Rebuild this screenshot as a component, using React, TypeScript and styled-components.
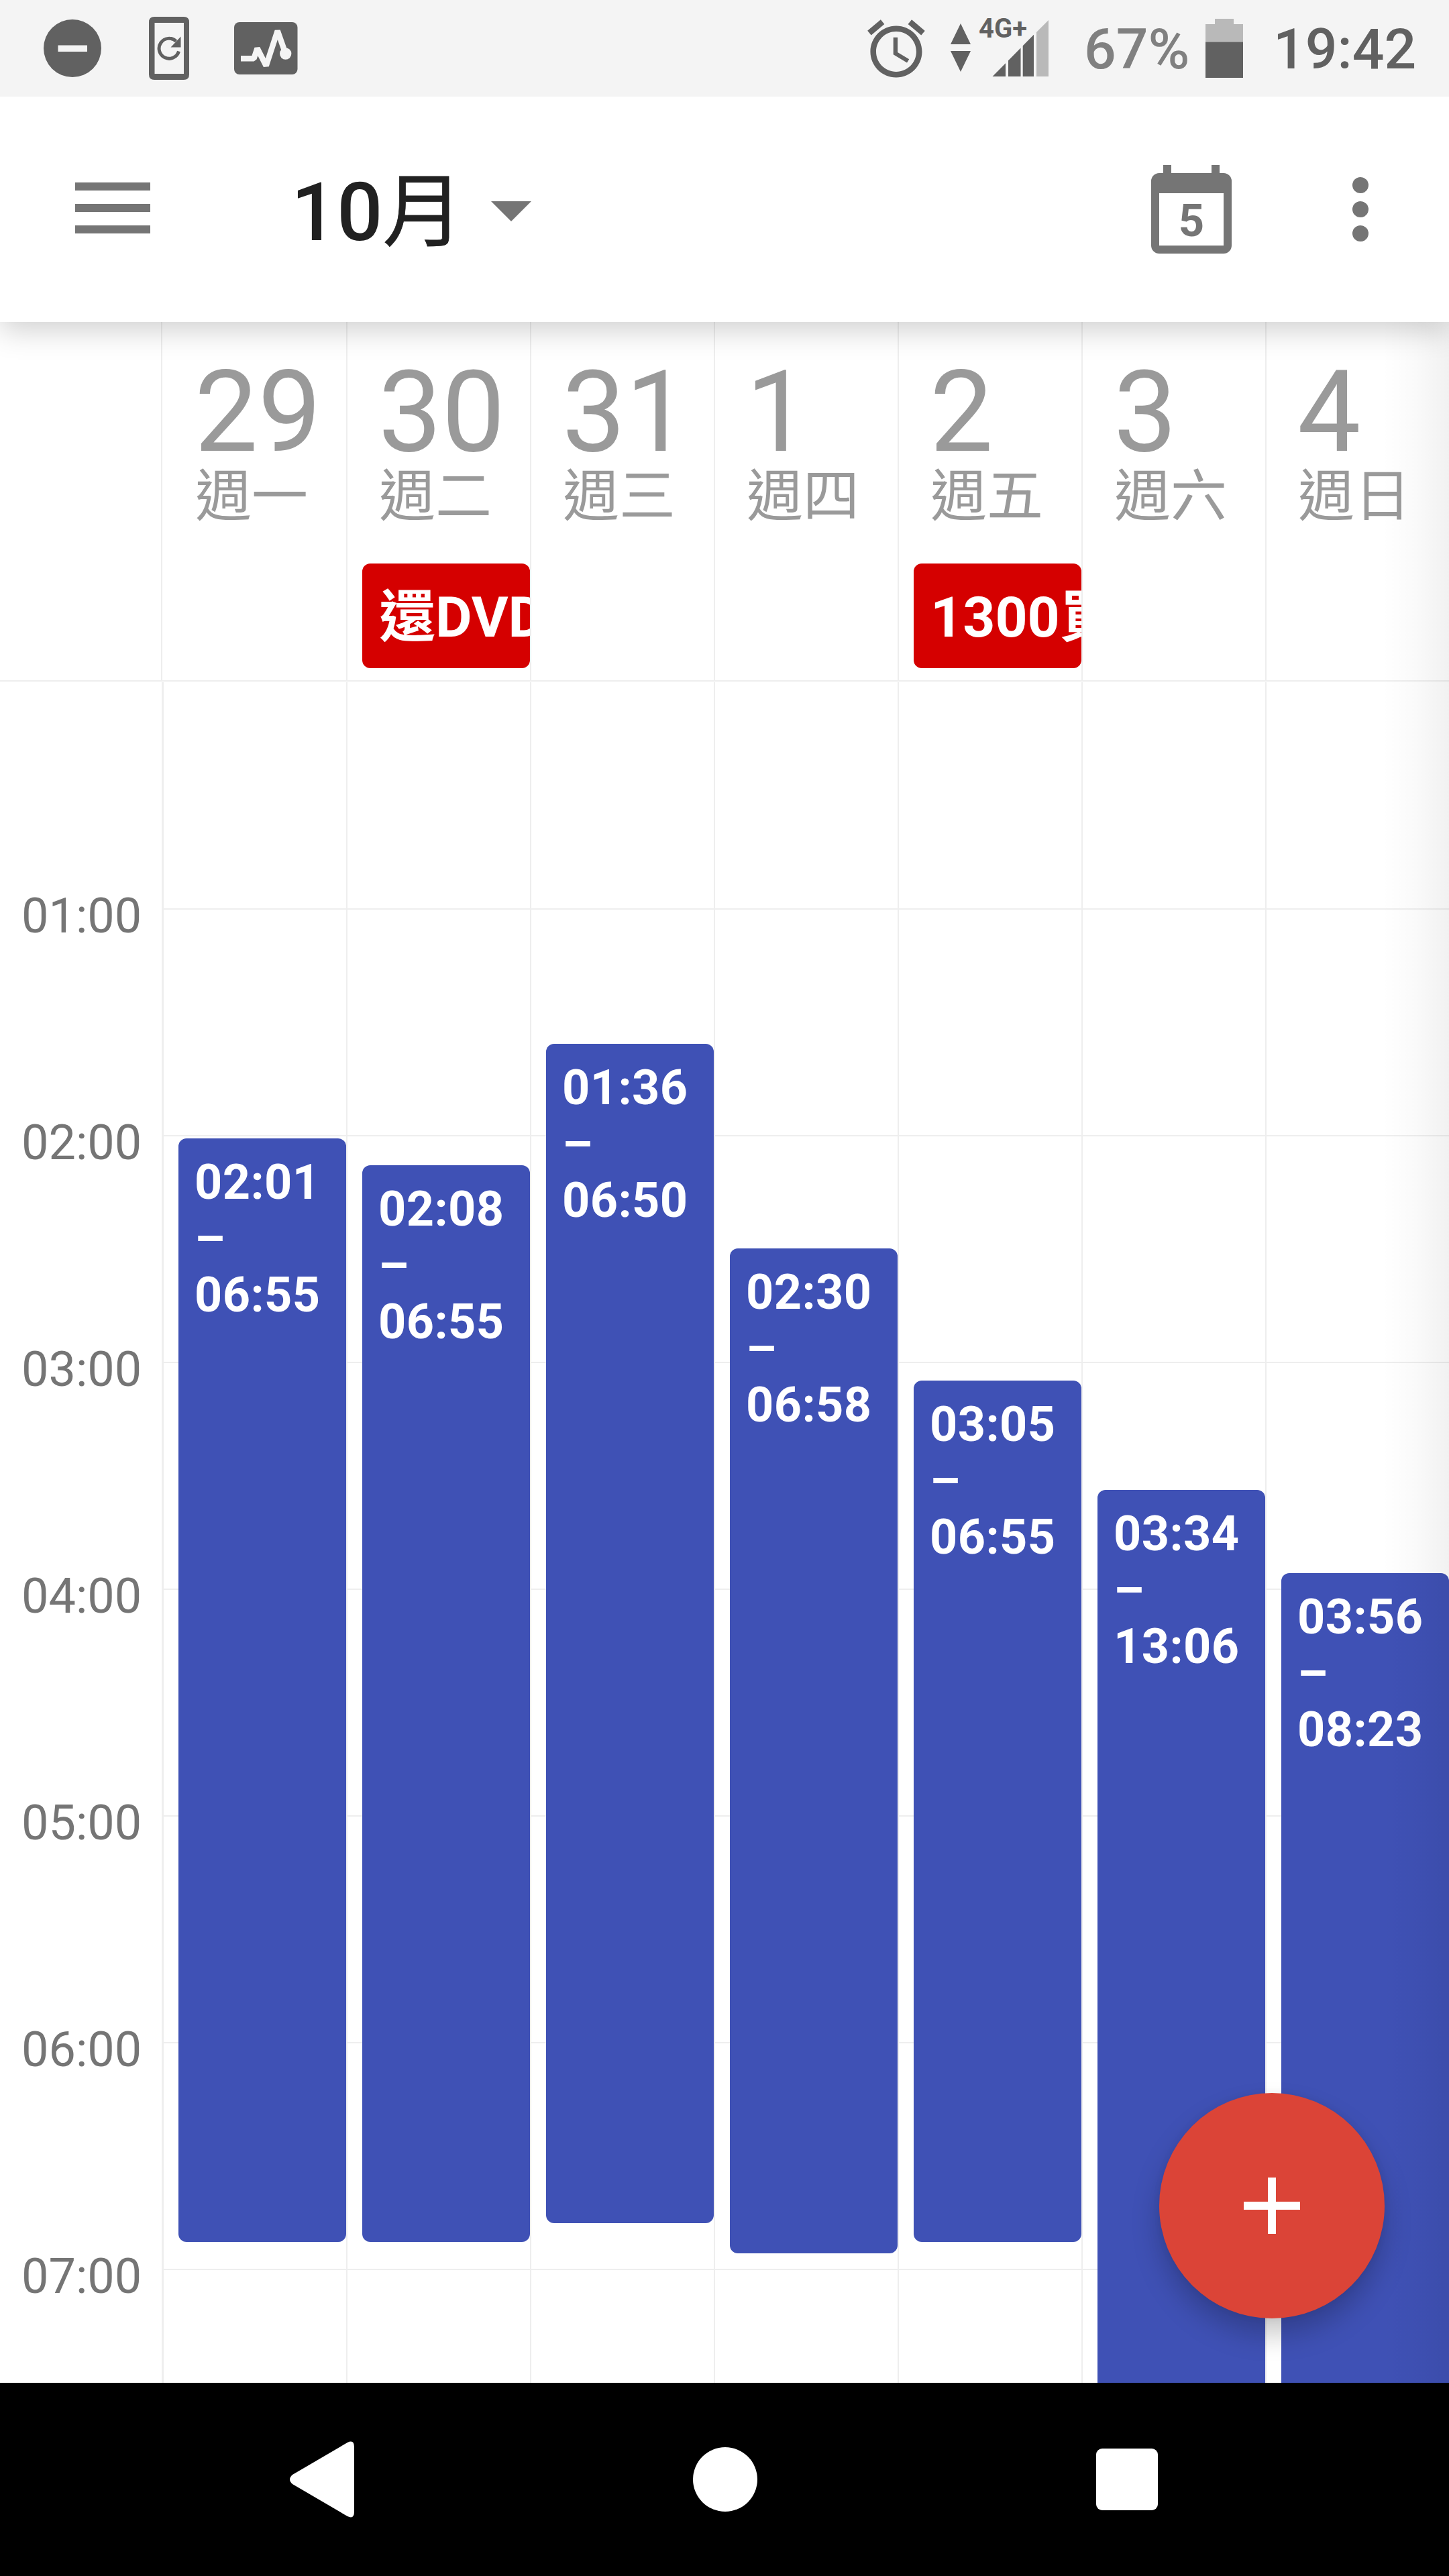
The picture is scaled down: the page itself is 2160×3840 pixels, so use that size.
import React from "react";
import styled, { createGlobalStyle } from "styled-components";

const LINE = "#eeeeee";
const ICON = "#757575";
const STATUS = "#616161";
const HOUR = 338;

const GlobalStyle = createGlobalStyle`
  *, *::before, *::after { box-sizing: border-box; }
  html, body { margin: 0; padding: 0; background: #fff; }
  body { font-family: Roboto, "Noto Sans CJK TC", sans-serif; }
  svg { display: block; flex: none; }
`;

const Screen = styled.div`
  width: 2160px;
  height: 3840px;
  display: flex;
  flex-direction: column;
  overflow: hidden;
  background: #fff;
`;

const StatusBar = styled.header`
  height: 144px;
  flex: none;
  display: flex;
  align-items: center;
  background: #f4f4f4;
  color: ${STATUS};
  position: relative;
  z-index: 4;
`;

const StatusIcon = styled.svg<{ $gap: number }>`
  height: 144px;
  margin-left: ${(p) => p.$gap}px;
`;

const Spacer = styled.div`
  flex: 1;
`;

const Battery = styled.span`
  margin-left: 47px;
  width: 160px;
  font-size: 84px;
  font-weight: 500;
  line-height: 144px;
  padding-top: 3px;
  color: #808080;
  white-space: nowrap;
`;

const Clock = styled.span`
  margin-left: 45px;
  width: 262px;
  font-size: 84px;
  font-weight: 500;
  line-height: 144px;
  padding-top: 3px;
`;

const AppBar = styled.div`
  height: 336px;
  flex: none;
  display: flex;
  align-items: center;
  background: #fff;
  box-shadow: 0 12px 42px rgba(0, 0, 0, 0.19);
  position: relative;
  z-index: 3;
`;

const Menu = styled.button`
  width: 112px;
  height: 76px;
  margin: 0 0 4px 112px;
  padding: 0;
  border: 0;
  background: none;
  display: flex;
  flex-direction: column;
  justify-content: space-between;
`;

const MenuBar = styled.span`
  height: 12px;
  background: ${ICON};
`;

const Title = styled.h1`
  margin: 9px 0 0 210px;
  width: 298px;
  font-size: 120px;
  line-height: 140px;
  font-weight: 500;
  color: #212121;
  white-space: nowrap;
`;

const TitleUnit = styled.span`
  font-weight: 400;
  -webkit-text-stroke: 0.8px #212121;
`;

const Caret = styled.span`
  border: 30px solid transparent;
  border-top-color: ${ICON};
  border-bottom: 0;
  margin-top: 6px;
`;

const TodayIcon = styled.div`
  width: 120px;
  height: 132px;
  display: flex;
  flex-direction: column;
`;

const Rings = styled.div`
  height: 12px;
  padding: 0 18px;
  display: flex;
  justify-content: space-between;
`;

const Ring = styled.span`
  width: 12px;
  background: ${ICON};
`;

const Page = styled.div`
  height: 120px;
  border: 12px solid ${ICON};
  border-top-width: 30px;
  border-radius: 12px;
  color: ${ICON};
  font-size: 67px;
  font-weight: 700;
  line-height: 82px;
  text-align: center;
`;

const More = styled.div`
  width: 24px;
  margin: 0 120px 0 180px;
  display: flex;
  flex-direction: column;
  gap: 12px;
`;

const Dot = styled.span`
  height: 24px;
  border-radius: 50%;
  background: ${ICON};
`;

const Calendar = styled.main`
  flex: 1;
  min-height: 0;
  display: flex;
  flex-direction: column;
  position: relative;
  overflow: hidden;
`;

const EdgeShade = styled.div`
  position: absolute;
  z-index: 1;
  top: 0;
  right: 0;
  bottom: 0;
  width: 100px;
  background: linear-gradient(to left, rgba(0, 0, 0, 0.055), rgba(0, 0, 0, 0.018) 50%, transparent);
`;

const DayHeader = styled.div`
  height: 536px;
  margin-bottom: 1px;
  flex: none;
  display: flex;
  padding-left: 240px;
  border-bottom: 2px solid ${LINE};
`;

const DayCell = styled.div`
  width: 274px;
  flex: none;
  border-left: 2px solid ${LINE};
  padding: 58px 0 0 22px;
  &:first-child { width: 276px; padding-left: 24px; }
`;

const DayNumber = styled.div`
  padding-left: 24px;
  font-size: 168px;
  line-height: 152px;
  padding-top: 1px;
  color: #9a9a9a;
`;

const Weekday = styled.div`
  padding-left: 25px;
  font-size: 84px;
  line-height: 100px;
  color: #9a9a9a;
  white-space: nowrap;
`;

const AllDay = styled.div`
  margin-top: 49px;
  width: 250px;
  height: 156px;
  padding-left: 25px;
  border-radius: 12px;
  background: #d50000;
  color: #fff;
  font-size: 84px;
  font-weight: 700;
  line-height: 162px;
  white-space: nowrap;
  overflow: hidden;
`;

const Timeline = styled.div`
  flex: 1;
  min-height: 0;
  display: flex;
`;

const Hours = styled.div`
  width: 241px;
  flex: none;
  padding-top: 305px;
  overflow: hidden;
`;

const HourLabel = styled.div`
  height: ${HOUR}px;
  padding-left: 32px;
  font-size: 72px;
  line-height: 88px;
  color: ${ICON};
`;

const Board = styled.div`
  flex: 1;
  display: grid;
  grid-template: 2535px / 1fr;
  border-left: 3px solid ${LINE};
  overflow: hidden;
`;

const Rules = styled.div`
  grid-area: 1 / 1;
  padding-top: 1px;
  overflow: hidden;
`;

const Rule = styled.div`
  height: ${HOUR}px;
  border-bottom: 2px solid ${LINE};
`;

const Columns = styled.div`
  grid-area: 1 / 1;
  display: flex;
  overflow: hidden;
`;

const Column = styled.div`
  width: 274px;
  flex: none;
  border-right: 2px solid ${LINE};
  &:last-child { border-right: 0; }
`;

const offset = (min: number) => Math.floor((min * HOUR) / 60);

const Event = styled.div<{ $start: number; $end: number }>`
  margin: ${(p) => offset(p.$start) - 1}px 0 0 22px;
  width: 250px;
  height: ${(p) => offset(p.$end) - offset(p.$start) - 11}px;
  padding: 24px 0 0 24px;
  border-radius: 12px;
  background: #3f51b5;
  color: #fff;
  font-size: 72px;
  font-weight: 700;
  line-height: 84px;
  letter-spacing: 0.4px;
`;

const Fab = styled.button`
  position: absolute;
  z-index: 2;
  right: 96px;
  bottom: 96px;
  width: 336px;
  height: 336px;
  padding: 0;
  border: 0;
  border-radius: 50%;
  background: #db4437;
  display: grid;
  place-items: center;
  box-shadow: 0 24px 42px rgba(0, 0, 0, 0.22), 0 0 12px rgba(0, 0, 0, 0.06);
`;

const NavBar = styled.nav`
  height: 288px;
  flex: none;
  display: flex;
  align-items: center;
  justify-content: space-between;
  padding: 0 434px 0 432px;
  background: #000;
`;

type Day = { n: string; w: string; allDay?: string; from: string; to: string };

const days: Day[] = [
  { n: "29", w: "週一", from: "02:01", to: "06:55" },
  { n: "30", w: "週二", allDay: "還DVD", from: "02:08", to: "06:55" },
  { n: "31", w: "週三", from: "01:36", to: "06:50" },
  { n: "1", w: "週四", from: "02:30", to: "06:58" },
  { n: "2", w: "週五", allDay: "1300買", from: "03:05", to: "06:55" },
  { n: "3", w: "週六", from: "03:34", to: "13:06" },
  { n: "4", w: "週日", from: "03:56", to: "08:23" },
];

const hours = ["01:00", "02:00", "03:00", "04:00", "05:00", "06:00", "07:00"];

const minutes = (t: string) => {
  const [h, m] = t.split(":").map(Number);
  return h * 60 + m;
};

export default function App() {
  return (
    <Screen>
      <GlobalStyle />
      <StatusBar>
        <StatusIcon $gap={65} width="86" viewBox="65 0 86 144">
          <circle cx="108" cy="72" r="43" fill={STATUS} />
          <rect x="86.5" y="67.5" width="43.5" height="9.5" fill="#f4f4f4" />
        </StatusIcon>
        <StatusIcon $gap={71} width="60" viewBox="222 0 60 144">
          <path
            fill={STATUS}
            fillRule="evenodd"
            d="M230 25H274Q282 25 282 33V111Q282 119 274 119H230Q222 119 222 111V33Q222 25 230 25ZM230.5 34V110H274V34Z"
          />
          <path d="M266.5 76.5A15 15 0 1 1 262.5 61.5" fill="none" stroke={STATUS} strokeWidth="5" />
          <path d="M269.5 54.5V70.5H254.5Z" fill={STATUS} />
        </StatusIcon>
        <StatusIcon $gap={67} width="95" viewBox="349 0 95 144">
          <rect x="349" y="33" width="94.5" height="78" rx="8" fill={STATUS} />
          <path
            d="M359 87.3H378.5L383.5 72L396.7 98L413.7 46L425.7 80"
            fill="none"
            stroke="#f4f4f4"
            strokeWidth="8.5"
            strokeLinejoin="bevel"
          />
          <circle cx="425.7" cy="80" r="8.7" fill="#f4f4f4" />
        </StatusIcon>
        <Spacer />
        <StatusIcon $gap={0} width="280" viewBox="1290 0 280 144">
          <path
            transform="translate(1285.6 21.4) scale(4.28)"
            fill={STATUS}
            d="M22 5.72l-4.6-3.86-1.29 1.53 4.6 3.86L22 5.72zM7.88 3.39L6.6 1.86 2 5.71l1.29 1.53 4.59-3.85zM12.5 8H11v6l4.75 2.85.75-1.23-4-2.37V8zM12 4c-4.97 0-9 4.03-9 9s4.02 9 9 9c4.97 0 9-4.03 9-9s-4.03-9-9-9zm0 16c-3.87 0-7-3.13-7-7s3.13-7 7-7 7 3.13 7 7-3.13 7-7 7z"
          />
          <path d="M1418 66L1433 35L1448 66ZM1418 76H1448L1433 107Z" fill={STATUS} />
          <text x="1460" y="55.500" fontSize="40" fontWeight="700" fill={STATUS}>
            4G+
          </text>
          <path d="M1480.500 114L1500 94.300V114ZM1504 114V90.300L1522.500 71.500V114ZM1525.700 114V68.300L1542 51.700V114Z" fill={STATUS} />
          <path d="M1546 114V48L1564 30V114Z" fill="#b9b9b9" />
        </StatusIcon>
        <Battery>67%</Battery>
        <StatusIcon $gap={21} width="56" viewBox="1798 0 56 144">
          <path d="M1812 28H1840V36H1854V62.500H1798V36H1812Z" fill="#b9b9b9" />
          <rect x="1798" y="62.5" width="56" height="53.5" fill={STATUS} />
        </StatusIcon>
        <Clock>19:42</Clock>
      </StatusBar>

      <AppBar>
        <Menu aria-label="menu">
          <MenuBar />
          <MenuBar />
          <MenuBar />
        </Menu>
        <Title>
          10<TitleUnit>月</TitleUnit>
        </Title>
        <Caret />
        <Spacer />
        <TodayIcon>
          <Rings>
            <Ring />
            <Ring />
          </Rings>
          <Page>5</Page>
        </TodayIcon>
        <More>
          <Dot />
          <Dot />
          <Dot />
        </More>
      </AppBar>

      <Calendar>
        <DayHeader>
          {days.map((d) => (
            <DayCell key={d.n}>
              <DayNumber>{d.n}</DayNumber>
              <Weekday>{d.w}</Weekday>
              {d.allDay && <AllDay>{d.allDay}</AllDay>}
            </DayCell>
          ))}
        </DayHeader>
        <Timeline>
          <Hours>
            {hours.map((h) => (
              <HourLabel key={h}>{h}</HourLabel>
            ))}
          </Hours>
          <Board>
            <Rules>
              {hours.map((h) => (
                <Rule key={h} />
              ))}
            </Rules>
            <Columns>
              {days.map((d) => (
                <Column key={d.n}>
                  <Event $start={minutes(d.from)} $end={minutes(d.to)}>
                    <div>{d.from}</div>
                    <div>–</div>
                    <div>{d.to}</div>
                  </Event>
                </Column>
              ))}
            </Columns>
          </Board>
        </Timeline>
        <EdgeShade />
        <Fab aria-label="add">
          <svg width="84" height="84" viewBox="0 0 84 84">
            <path d="M36 0H48V36H84V48H48V84H36V48H0V36H36Z" fill="#fff" />
          </svg>
        </Fab>
      </Calendar>

      <NavBar>
        <svg width="96" height="114" viewBox="0 0 96 114">
          <path d="M4 50L86 2Q96 -3 96 9V105Q96 117 86 112L4 64Q-4 57 4 50Z" fill="#fff" />
        </svg>
        <svg width="96" height="96" viewBox="0 0 96 96">
          <circle cx="48" cy="48" r="48" fill="#fff" />
        </svg>
        <svg width="92" height="92" viewBox="0 0 92 92">
          <rect width="92" height="92" rx="9" fill="#fff" />
        </svg>
      </NavBar>
    </Screen>
  );
}
